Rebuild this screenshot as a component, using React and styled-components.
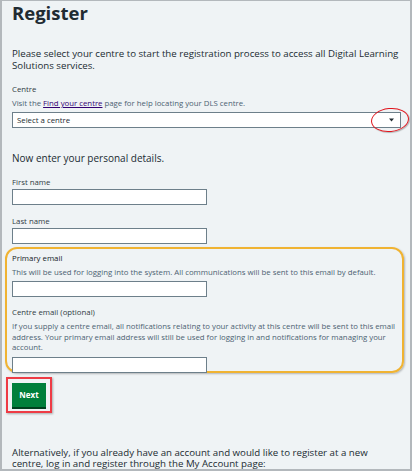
import React from 'react'
import styled, { createGlobalStyle } from 'styled-components'

const GlobalStyle = createGlobalStyle`
    * { box-sizing: border-box; }
    body {
        margin: 0;
        background: #eff3f5;
        font-family: "Open Sans", "Noto Sans", sans-serif;
        color: #212b32;
    }
`

function App() {
    return (
        <>
            <GlobalStyle />
            <Frame>
                <Title>Register</Title>
                <Intro>
                    Please select your centre to start the registration process to access all Digital Learning
                    Solutions services.
                </Intro>

                <Label>Centre</Label>
                <Hint>
                    Visit the <HintLink href="#">Find your centre</HintLink> page for help locating your DLS centre.
                </Hint>
                <SelectWrap>
                    <Select>
                        <span>Select a centre</span>
                        <svg width="5" height="4" viewBox="0 0 5 4">
                            <path d="M0 0.5 L5 0.5 L2.5 3.5 Z" fill="#212b32" />
                        </svg>
                    </Select>
                    <Circled />
                </SelectWrap>

                <Lead>Now enter your personal details.</Lead>

                <Label>First name</Label>
                <Input $after="label" $below="11px" />
                <Label>Last name</Label>
                <Input $after="label" $below="3px" />

                <Highlight>
                    <Label $strong>Primary email</Label>
                    <Hint>This will be used for logging into the system. All communications will be sent to this email by default.</Hint>
                    <Input $after="hint" $below="10px" />
                    <Label>Centre email (optional)</Label>
                    <Hint>
                        If you supply a centre email, all notifications relating to your activity at this centre will be sent to this email
                        address. Your primary email address will still be used for logging in and notifications for managing your
                        account.
                    </Hint>
                    <Input $after="hint" $below="0" />
                </Highlight>

                <ButtonBox>
                    <NextButton>Next</NextButton>
                </ButtonBox>

                <Outro>
                    Alternatively, if you already have an account and would like to register at a new
                    centre, log in and register through the My Account page:
                </Outro>
            </Frame>
        </>
    )
}

export default App

const Frame = styled.div`
    width: 412px;
    height: 471px;
    overflow: hidden;
    border: 2px solid #b3b8bc;
    border-top-width: 1px;
    padding: 0 10px;
    background: #eff3f5;
`

const Title = styled.h1`
    font-size: 18.5px;
    font-weight: 700;
    line-height: 24px;
    margin: 0;
`

const Intro = styled.p`
    font-size: 9.7px;
    line-height: 12px;
    margin: 23px 0 12px;
`

const Label = styled.div`
    font-size: 7.8px;
    line-height: 11px;
    color: ${p => (p.$strong ? '#141a1f' : '#2f3b44')};
`

const Hint = styled.div`
    font-size: 7.8px;
    line-height: 10.5px;
    color: #4c6272;
    margin-top: 3px;
`

const HintLink = styled.a`
    color: #330072;
    text-decoration: underline;
`

const SelectWrap = styled.div`
    position: relative;
    margin-top: 3px;
`

const Select = styled.div`
    height: 16px;
    width: 389px;
    background: #fff;
    border: 1px solid #6d7f8a;
    display: flex;
    align-items: center;
    justify-content: space-between;
    padding: 0 6px 0 4px;
    font-size: 7.8px;
`

const Circled = styled.div`
    position: absolute;
    left: 359px;
    top: -4px;
    width: 38px;
    height: 24px;
    border: 1.5px solid #e0141c;
    border-radius: 50%;
    box-shadow: 1px 1px 1px rgba(0, 0, 0, 0.25);
    transform: rotate(-6deg);
`

const Lead = styled.div`
    font-size: 10px;
    line-height: 14px;
    margin: 23px 0 12px;
`

const Input = styled.div`
    width: 195px;
    height: 16px;
    background: #fff;
    border: 1px solid #6d7f8a;
    margin-top: ${p => (p.$after === 'hint' ? '4px' : '1px')};
    margin-bottom: ${p => p.$below};
`

const Highlight = styled.div`
    margin: 0 -4px 0 -7px;
    padding: 4px 5px 0 5px;
    border: 2px solid #f0b332;
    border-radius: 12px;
    box-shadow: 1px 1px 2px rgba(0, 0, 0, 0.25);
    height: 126px;
`

const ButtonBox = styled.div`
    display: inline-block;
    margin: 4px 0 0 -6px;
    padding: 4px;
    border: 2px solid #ee3b45;
    box-shadow: 1px 1px 2px rgba(0, 0, 0, 0.3);
`

const NextButton = styled.button`
    display: block;
    width: 34px;
    height: 24px;
    padding: 0;
    border: none;
    background: #007f3b;
    box-shadow: 0 2px 0 #00401e;
    color: #fff;
    font-family: inherit;
    font-weight: 700;
    font-size: 8px;
`

const Outro = styled.p`
    font-size: 9.7px;
    line-height: 11.5px;
    max-width: 372px;
    margin: 34px 0 0;
`
